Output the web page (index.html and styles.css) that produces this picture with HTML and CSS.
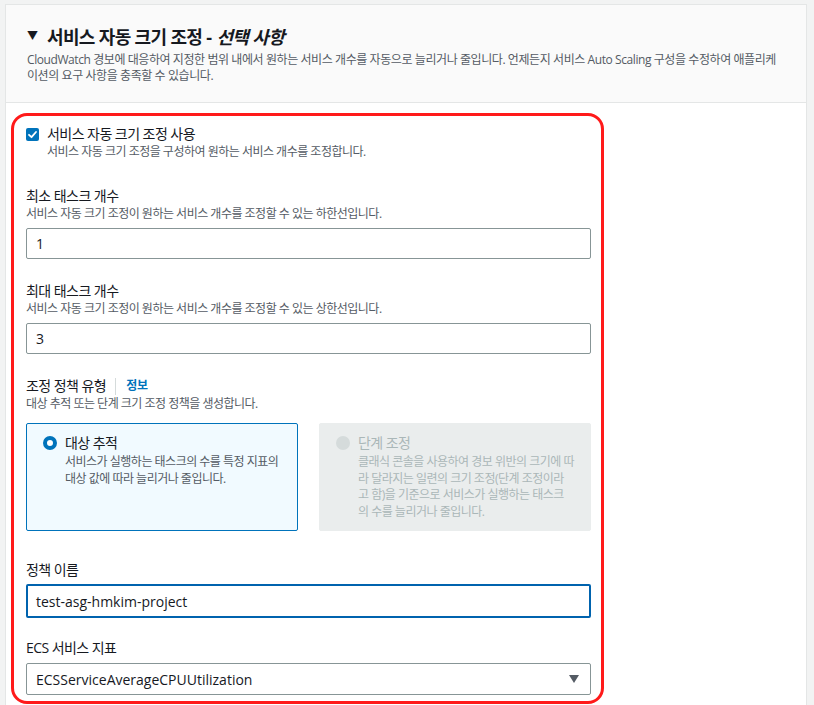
FILE: index.html
```html
<!DOCTYPE html>
<html lang="ko">
<head>
<meta charset="utf-8">
<link rel="stylesheet" href="styles.css">
</head>
<body>
<div class="card">
  <div class="card-header">
    <h2 class="title"><span class="caret">▼</span>서비스 자동 크기 조정 - <i>선택 사항</i></h2>
    <p class="header-desc">CloudWatch 경보에 대응하여 지정한 범위 내에서 원하는 서비스 개수를 자동으로 늘리거나 줄입니다. 언제든지 서비스 Auto Scaling 구성을 수정하여 애플리케이션의 요구 사항을 충족할 수 있습니다.</p>
  </div>
  <div class="card-body">
    <div class="highlight">
      <div class="check-row">
        <span class="checkbox"><svg width="13" height="13" viewBox="0 0 13 13"><rect x="0" y="0" width="13" height="13" rx="2" fill="#0073bb"/><path d="M3 6.8 L5.5 9.2 L10 4" fill="none" stroke="#fff" stroke-width="1.8" stroke-linecap="round" stroke-linejoin="round"/></svg></span>
        <div>
          <div class="check-label">서비스 자동 크기 조정 사용</div>
          <div class="desc">서비스 자동 크기 조정을 구성하여 원하는 서비스 개수를 조정합니다.</div>
        </div>
      </div>

      <div class="field f-min">
        <div class="label">최소 태스크 개수</div>
        <div class="desc">서비스 자동 크기 조정이 원하는 서비스 개수를 조정할 수 있는 하한선입니다.</div>
        <div class="input">1</div>
      </div>

      <div class="field">
        <div class="label">최대 태스크 개수</div>
        <div class="desc">서비스 자동 크기 조정이 원하는 서비스 개수를 조정할 수 있는 상한선입니다.</div>
        <div class="input">3</div>
      </div>

      <div class="field">
        <div class="label">조정 정책 유형<span class="sep"></span><a class="info">정보</a></div>
        <div class="desc">대상 추적 또는 단계 크기 조정 정책을 생성합니다.</div>
        <div class="tiles">
          <div class="tile selected">
            <span class="radio on"></span>
            <div>
              <div class="tile-title">대상 추적</div>
              <div class="tile-desc">서비스가 실행하는 태스크의 수를 특정 지표의 대상 값에 따라 늘리거나 줄입니다.</div>
            </div>
          </div>
          <div class="tile disabled">
            <span class="radio off"></span>
            <div>
              <div class="tile-title">단계 조정</div>
              <div class="tile-desc lines">클래식 콘솔을 사용하여 경보 위반의 크기에 따<br>라 달라지는 일련의 크기 조정(단계 조정이라<br>고 함)을 기준으로 서비스가 실행하는 태스크<br>의 수를 늘리거나 줄입니다.</div>
            </div>
          </div>
        </div>
      </div>

      <div class="field f-name">
        <div class="label">정책 이름</div>
        <div class="input focus">test-asg-hmkim-project</div>
      </div>

      <div class="field f-metric">
        <div class="label">ECS 서비스 지표</div>
        <div class="input select">ECSServiceAverageCPUUtilization<svg class="arrow" width="10" height="8" viewBox="0 0 10 8"><path d="M0 0 H10 L5 8 Z" fill="#545b64"/></svg></div>
      </div>
    </div>
  </div>
</div>
</body>
</html>
```

FILE: styles.css
```css
* { box-sizing: border-box; }
html, body { margin: 0; padding: 0; }
body {
  background: #f2f3f3;
  font-family: "Open Sans", "Noto Sans CJK KR", sans-serif;
  color: #16191f;
  padding: 4px 7px 0 5px;
  height: 705px;
  overflow: hidden;
}
.card {
  background: #fff;
  border: 1px solid #e4e6e6;
  border-bottom: none;
  height: 710px;
}
.card-header {
  background: #fafafa;
  border-bottom: 1px solid #e4e6e6;
  padding: 18px 20px 0 21px;
  height: 98px;
}
.title {
  margin: 0;
  font-size: 18px;
  line-height: 28px;
  font-weight: 700;
  letter-spacing: -0.65px;
  display: flex;
  align-items: center;
}
.title i { font-style: italic; margin-left: 5px; }
.caret {
  font-size: 11px;
  margin-right: 9px;
  letter-spacing: 0;
  position: relative;
  top: -1px;
}
.header-desc {
  margin: 1px 0 0;
  font-size: 12px;
  line-height: 16px;
  color: #545b64;
  letter-spacing: -0.42px;
}
.card-body {
  padding: 10px 5px 0 5px;
}
.highlight {
  width: 593px;
  height: 591px;
  border: 3px solid #ff1a1a;
  border-radius: 16px;
  padding: 8px 10px 0 12px;
}
.check-row {
  display: flex;
  align-items: flex-start;
  gap: 8px;
}
.checkbox { margin-top: 4px; line-height: 0; }
.check-label { font-size: 14px; line-height: 20px; letter-spacing: -0.55px; }
.desc {
  font-size: 12px;
  line-height: 16px;
  color: #545b64;
  letter-spacing: -0.5px;
}
.field { margin-top: 22px; }
.f-min { margin-top: 26px; }
.label {
  font-size: 14px;
  line-height: 20px;
  letter-spacing: -0.55px;
  display: flex;
  align-items: center;
}
.input {
  margin-top: 6px;
  width: 565px;
  height: 31px;
  border: 1px solid #879596;
  border-radius: 2px;
  padding: 0 9px;
  font-size: 14px;
  display: flex;
  align-items: center;
}
.sep {
  display: inline-block;
  width: 1px;
  height: 17px;
  background: #d5dbdb;
  margin: 0 10px 0 9px;
}
.info {
  color: #0073bb;
  font-weight: 700;
  font-size: 12px;
  letter-spacing: -0.3px;
}
.tiles {
  margin-top: 11px;
  display: flex;
  gap: 21px;
}
.tile {
  width: 272px;
  height: 108px;
  border-radius: 2px;
  display: flex;
  gap: 8px;
  padding: 9px 14px 0 16px;
}
.tile.selected {
  background: #f1faff;
  border: 1px solid #0073bb;
}
.tile.disabled {
  background: #eaeded;
  border: 1px solid #eaeded;
  color: #aab7b8;
}
.radio {
  flex: none;
  width: 14px;
  height: 14px;
  border-radius: 50%;
  margin-top: 3px;
}
.radio.on { border: 4px solid #0073bb; background: #fff; }
.radio.off { background: #d5dbdb; }
.tile-title { font-size: 14px; line-height: 20px; letter-spacing: -0.55px; }
.tile-desc { font-size: 12px; line-height: 16.5px; color: #545b64; margin-top: 1px; letter-spacing: -0.5px; }
.tile-desc.lines { white-space: nowrap; }
.tile.disabled .tile-desc { color: #aab7b8; }
.f-name { margin-top: 29px; }
.f-name .input { margin-top: 4px; height: 34px; border: 2px solid #0063ae; padding: 0 8px; }
.f-metric { margin-top: 20px; }
.f-metric .input { margin-top: 5px; height: 32px; justify-content: space-between; padding-right: 11px; }
.arrow { display: block; }
```
